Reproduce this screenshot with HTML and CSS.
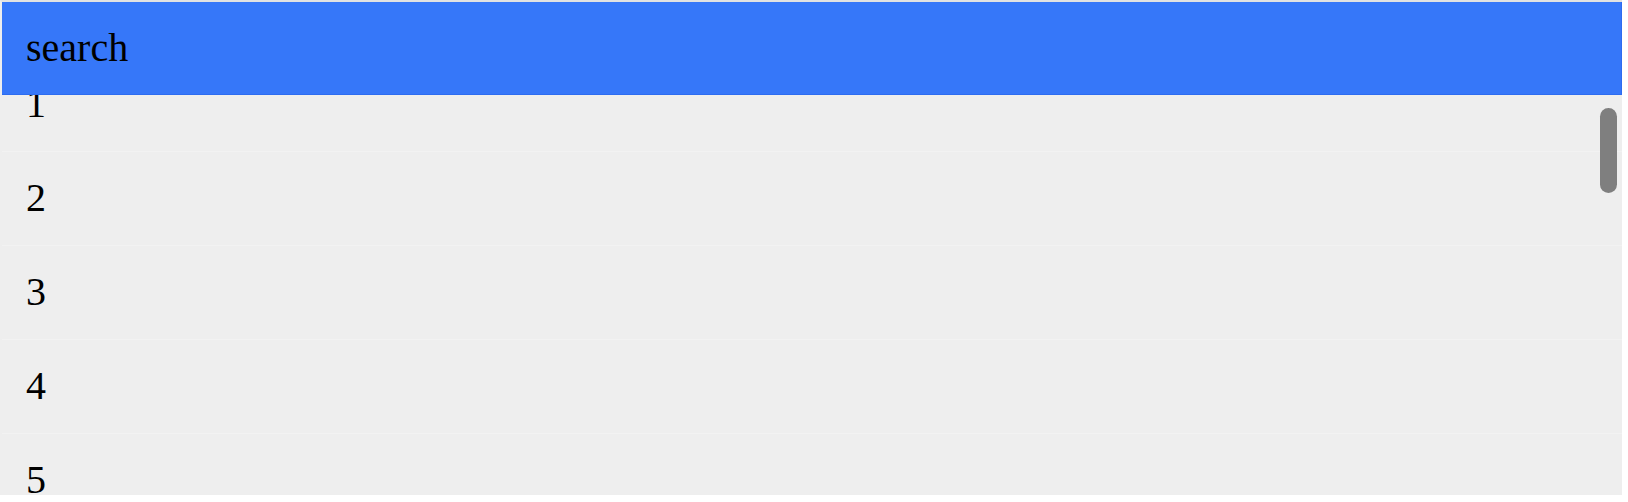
FILE: index.html
```html
<!DOCTYPE html>
<html>
<head>
<meta charset="utf-8">
<link rel="stylesheet" href="styles.css">
</head>
<body>
<div class="frame">
  <div class="header">search</div>
  <ul class="list">
    <li class="row">1</li>
    <li class="row">2</li>
    <li class="row">3</li>
    <li class="row">4</li>
    <li class="row">5</li>
    <li class="row">6</li>
  </ul>
  <div class="thumb"></div>
</div>
</body>
</html>
```
FILE: styles.css
```css
html, body {
  margin: 0;
  padding: 0;
  background: #ffffff;
}
.frame {
  position: relative;
  width: 1620px;
  height: 493px;
  border-top: 2px solid #e2e2e2;
  border-left: 2px solid #eeeeee;
  background: #eeeeee;
  overflow: hidden;
  display: flex;
  flex-direction: column;
  font-family: "Liberation Serif", "Times New Roman", serif;
  font-size: 40px;
  color: #000;
}
.header {
  position: relative;
  z-index: 1;
  flex: none;
  box-sizing: border-box;
  height: 93px;
  padding: 23px 24px 0;
  line-height: 46px;
  background: #3677f9;
  border-right: 1px solid #2d6cf0;
  border-bottom: 1px solid #2d6cf0;
}
.list {
  list-style: none;
  margin: -37px 0 0;
  padding: 0;
  flex: none;
}
.row {
  box-sizing: border-box;
  height: 94px;
  padding: 23px 24px 0;
  line-height: 46px;
  border-bottom: 1px solid #f2f2f2;
}
.thumb {
  position: absolute;
  z-index: 2;
  top: 106px;
  right: 5px;
  width: 17px;
  height: 85px;
  border-radius: 9px;
  background: #7f7f7f;
}
```
